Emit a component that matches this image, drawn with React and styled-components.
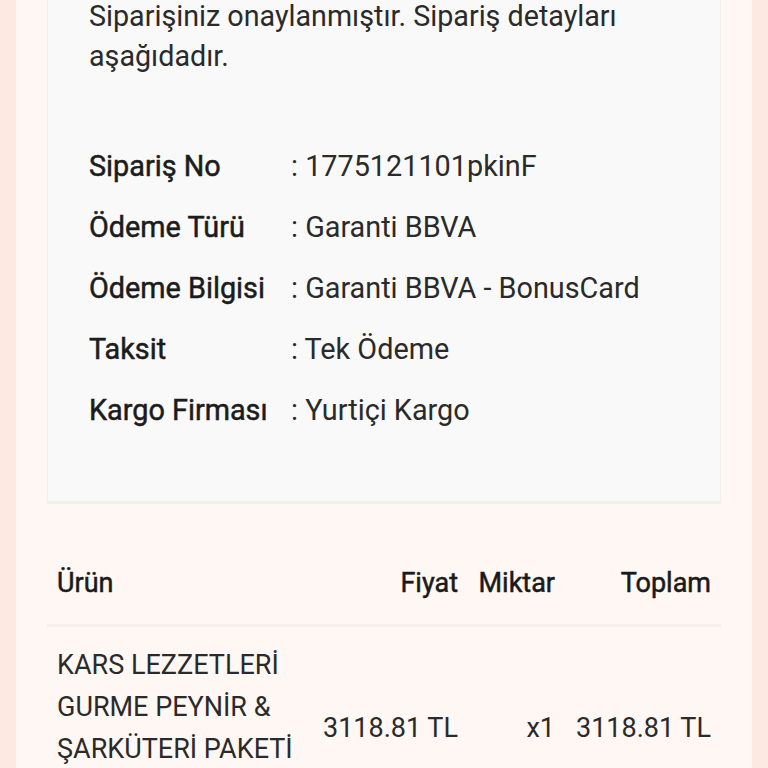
import styled, { createGlobalStyle } from "styled-components";

const GlobalStyle = createGlobalStyle`
  html, body {
    margin: 0;
    padding: 0;
    background: #fde9e2;
    overflow: hidden;
  }
  body {
    font-family: Roboto, "Noto Sans", sans-serif;
    color: #222;
  }
`;

const Page = styled.div`
  width: 768px;
  height: 768px;
  padding: 0 16px;
  box-sizing: border-box;
  overflow: hidden;
`;

const Sheet = styled.main`
  display: flow-root;
  background: #fef7f4;
  height: 100%;
  padding: 0 31px;
  box-sizing: border-box;
`;

const Card = styled.section`
  margin-top: -22px;
  background: #f9f9f9;
  border: 1px solid #f1f0ee;
  border-bottom: 3px solid #f1f1ec;
  padding: 17px 41px 71px;
`;

const Message = styled.p`
  margin: 0 0 70px;
  font-size: 28.7px;
  line-height: 40px;
  font-weight: 400;
  color: #2a2a2a;
  max-width: 580px;
`;

const Details = styled.dl`
  display: grid;
  grid-template-columns: 202px 1fr;
  row-gap: 21px;
  margin: 0;
  font-size: 28.8px;
  line-height: 40px;
`;

const Label = styled.dt`
  font-weight: 400;
  -webkit-text-stroke: 0.5px #1c1c1c;
  color: #1c1c1c;
  white-space: nowrap;
`;

const Value = styled.dd`
  margin: 0;
  color: #2a2a2a;
`;

const Table = styled.div`
  display: grid;
  grid-template-columns: 266px 155px 97px 156px;
  margin-top: 49px;
  font-size: 27px;
`;

const Head = styled.div`
  padding: 10px 10px 21px;
  line-height: 40px;
  font-weight: 400;
  -webkit-text-stroke: 0.5px #1a1a1a;
  color: #1a1a1a;
  text-align: ${(p) => (p.$right ? "right" : "left")};
  border-bottom: 3px solid #f6f1ee;
`;

const Cell = styled.div`
  padding: 17px 10px ${(p) => (p.$tall ? "59px" : "17px")};
  line-height: 42px;
  color: #2a2a2a;
  display: flex;
  align-items: center;
  justify-content: ${(p) => (p.$right ? "flex-end" : "flex-start")};
  text-align: ${(p) => (p.$right ? "right" : "left")};
`;

const details = [
  ["Sipariş No", "1775121101pkinF"],
  ["Ödeme Türü", "Garanti BBVA"],
  ["Ödeme Bilgisi", "Garanti BBVA - BonusCard"],
  ["Taksit", "Tek Ödeme"],
  ["Kargo Firması", "Yurtiçi Kargo"],
];

export default function App() {
  return (
    <>
      <GlobalStyle />
      <Page>
        <Sheet>
          <Card>
            <Message>
              Siparişiniz onaylanmıştır. Sipariş detayları aşağıdadır.
            </Message>
            <Details>
              {details.map(([k, v]) => [
                <Label key={k}>{k}</Label>,
                <Value key={k + "v"}>: {v}</Value>,
              ])}
            </Details>
          </Card>
          <Table>
            <Head>Ürün</Head>
            <Head $right>Fiyat</Head>
            <Head $right>Miktar</Head>
            <Head $right>Toplam</Head>
            <Cell $tall>
              KARS LEZZETLERİ GURME PEYNİR &amp; ŞARKÜTERİ PAKETİ
            </Cell>
            <Cell $right>3118.81 TL</Cell>
            <Cell $right>x1</Cell>
            <Cell $right>3118.81 TL</Cell>
          </Table>
        </Sheet>
      </Page>
    </>
  );
}
